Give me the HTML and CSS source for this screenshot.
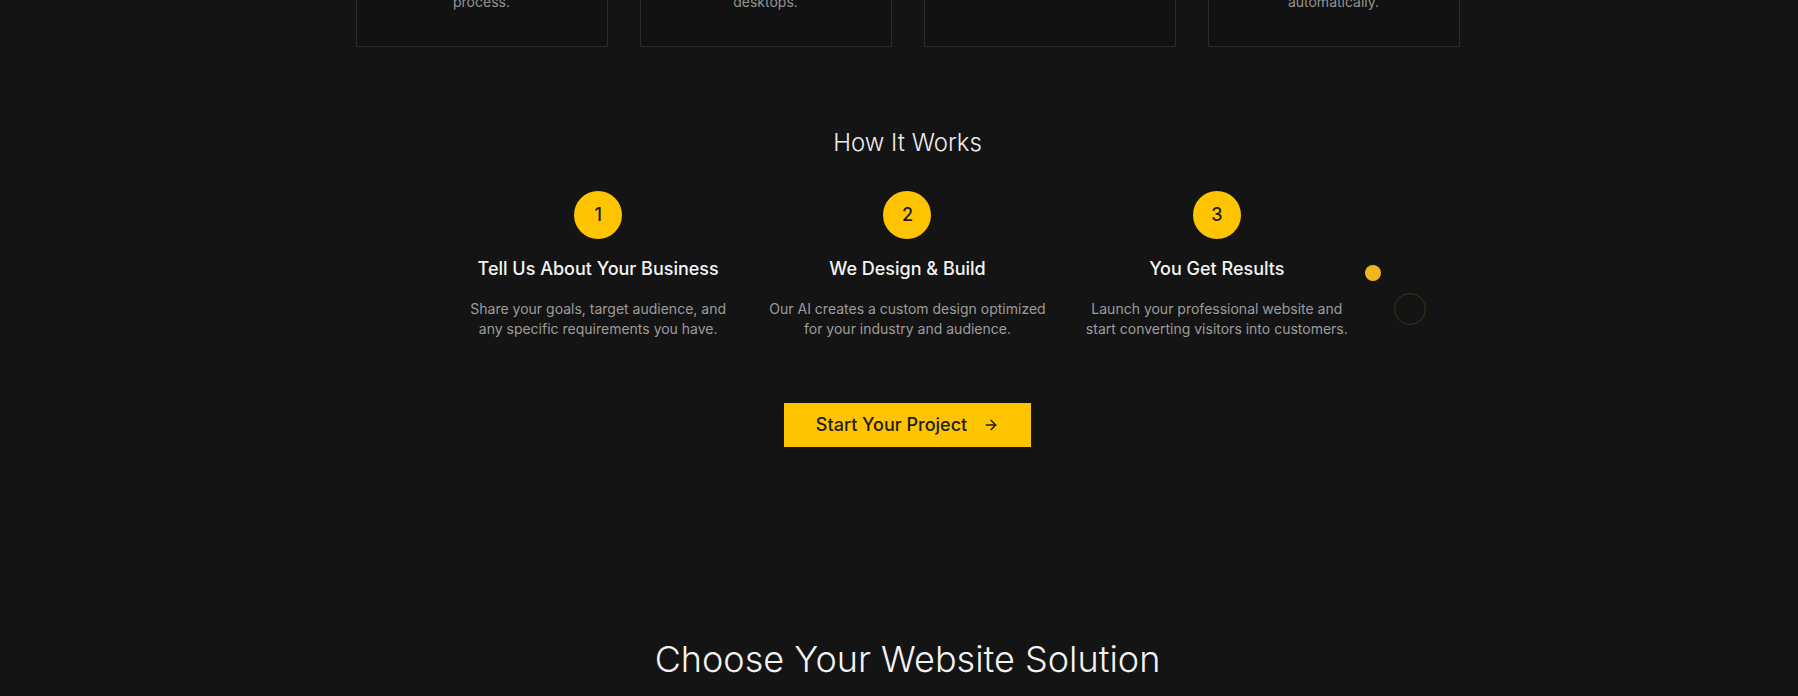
FILE: index.html
```html
<!DOCTYPE html>
<html lang="en">
<head>
<meta charset="utf-8">
<title>How It Works</title>
<link rel="stylesheet" href="styles.css">
</head>
<body>
<div class="page">
  <section class="features">
    <div class="container-wide">
      <div class="feature-grid">
        <div class="card">
          <div class="card-icon"></div>
          <h3 class="card-title">Fast Delivery</h3>
          <p class="card-text">A quick and simple<br>process.</p>
        </div>
        <div class="card">
          <div class="card-icon"></div>
          <h3 class="card-title">Responsive Design</h3>
          <p class="card-text">Perfect on mobile and<br>desktops.</p>
        </div>
        <div class="card">
          <div class="card-icon"></div>
          <h3 class="card-title">SEO Optimized</h3>
          <p class="card-text">Built to rank in search.</p>
        </div>
        <div class="card">
          <div class="card-icon"></div>
          <h3 class="card-title">Auto Updates</h3>
          <p class="card-text">Content stays fresh<br>automatically.</p>
        </div>
      </div>
    </div>
  </section>

  <section class="how">
    <h2 class="section-title">How It Works</h2>
    <div class="steps">
      <div class="step">
        <div class="step-num">1</div>
        <h3 class="step-title">Tell Us About Your Business</h3>
        <p class="step-text">Share your goals, target audience, and any specific requirements you have.</p>
      </div>
      <div class="step">
        <div class="step-num">2</div>
        <h3 class="step-title">We Design &amp; Build</h3>
        <p class="step-text">Our AI creates a custom design optimized for your industry and audience.</p>
      </div>
      <div class="step">
        <div class="step-num">3</div>
        <h3 class="step-title">You Get Results</h3>
        <p class="step-text">Launch your professional website and start converting visitors into customers.</p>
      </div>
    </div>
    <div class="cta-row">
      <a class="cta" href="#">
        <span>Start Your Project</span>
        <svg class="cta-arrow" viewBox="0 0 24 24" width="16" height="16" fill="none" stroke="currentColor" stroke-width="2" stroke-linecap="round" stroke-linejoin="round"><path d="M5 12h14"/><path d="m12 5 7 7-7 7"/></svg>
      </a>
    </div>
  </section>

  <section class="solutions">
    <h2 class="solutions-title">Choose Your Website Solution</h2>
  </section>

  <span class="deco-dot"></span>
  <span class="deco-ring"></span>
</div>
</body>
</html>
```

FILE: styles.css
```css
* { box-sizing: border-box; }

html, body {
  margin: 0;
  padding: 0;
  background: #141414;
}

body {
  font-family: Inter, "Noto Sans", "Liberation Sans", sans-serif;
  color: #f2f2f2;
  overflow: hidden;
  height: 696px;
}

.page {
  position: relative;
  display: flow-root;
  padding-left: 17px;
}

/* Features (scrolled mostly out of view) */
.features {
  margin-top: -165px;
}

.container-wide {
  max-width: 1152px;
  margin: 0 auto;
  padding: 0 24px;
}

.feature-grid {
  display: grid;
  grid-template-columns: repeat(4, 1fr);
  gap: 32px;
}

.card {
  background: #121212;
  border: 1px solid #2b2b2b;
  padding: 32px;
  text-align: center;
}

.card-icon {
  width: 48px;
  height: 48px;
  margin: 0 auto 16px;
}

.card-title {
  margin: 0 0 8px;
  font-size: 18px;
  line-height: 28px;
  font-weight: 500;
  color: #f2f2f2;
}

.card-text {
  margin: 0;
  font-size: 14px;
  line-height: 22.75px;
  color: #929292;
}

/* How it works */
.how {
  padding: 80px 24px 96px;
  text-align: center;
}

.section-title {
  margin: 0 0 32px;
  font-size: 24px;
  line-height: 32px;
  font-weight: 300;
  color: #ececec;
}

.steps {
  max-width: 896px;
  margin: 0 auto;
  display: grid;
  grid-template-columns: repeat(3, 1fr);
  gap: 32px;
}

.step {
  display: flex;
  flex-direction: column;
  align-items: center;
}

.step-num {
  width: 48px;
  height: 48px;
  border-radius: 50%;
  background: #ffc400;
  color: #1c1c1c;
  font-size: 18px;
  font-weight: 500;
  display: flex;
  align-items: center;
  justify-content: center;
  margin-bottom: 16px;
}

.step-title {
  margin: 0 0 16px;
  font-size: 18px;
  line-height: 28px;
  font-weight: 500;
  color: #f4f4f4;
}

.step-text {
  margin: 0;
  font-size: 14px;
  line-height: 20px;
  color: #9c9c9c;
}

.cta-row {
  margin-top: 64px;
  display: flex;
  justify-content: center;
}

.cta {
  display: inline-flex;
  align-items: center;
  gap: 16px;
  padding: 8px 32px;
  background: #ffc400;
  color: #1c1c1c;
  font-size: 18px;
  line-height: 28px;
  font-weight: 500;
  text-decoration: none;
}

.cta-arrow { display: block; }

/* Solutions */
.solutions {
  padding: 96px 24px 0;
  text-align: center;
}

.solutions-title {
  margin: 0;
  font-size: 36px;
  line-height: 40px;
  font-weight: 300;
  color: #f2f2f2;
}

/* Decorations */
.deco-dot {
  position: absolute;
  left: 1365px;
  top: 265px;
  width: 16px;
  height: 16px;
  border-radius: 50%;
  background: #eeb61c;
}

.deco-ring {
  position: absolute;
  left: 1394px;
  top: 293px;
  width: 32px;
  height: 32px;
  border-radius: 50%;
  border: 1px solid rgba(238, 182, 28, 0.18);
}
```
